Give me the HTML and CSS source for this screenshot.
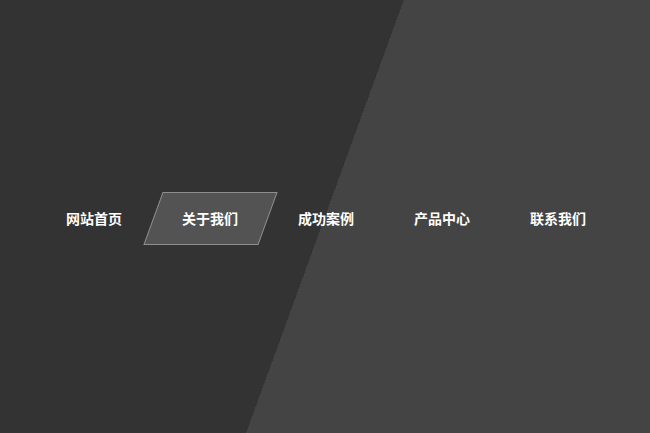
FILE: index.html
```html
<!DOCTYPE html>
<html lang="zh">
<head>
<meta charset="utf-8">
<title>导航</title>
<link rel="stylesheet" href="styles.css">
</head>
<body>
<div class="stage">
  <nav class="nav">
    <a class="nav-item" href="#">网站首页</a>
    <a class="nav-item active" href="#">关于我们</a>
    <a class="nav-item" href="#">成功案例</a>
    <a class="nav-item" href="#">产品中心</a>
    <a class="nav-item" href="#">联系我们</a>
  </nav>
</div>
</body>
</html>
```

FILE: styles.css
```css
html, body {
  margin: 0;
  padding: 0;
  height: 100%;
}
body {
  background: linear-gradient(110deg, #333333 50%, #444444 50%);
  font-family: "Microsoft YaHei", "Noto Sans CJK SC", "Noto Sans", sans-serif;
}
.stage {
  height: 100%;
  display: flex;
  align-items: center;
  justify-content: center;
}
.nav {
  display: flex;
  margin-top: 3px;
  margin-left: 2px;
}
.nav-item {
  position: relative;
  width: 116px;
  height: 53px;
  display: flex;
  align-items: center;
  justify-content: center;
  color: #ffffff;
  text-decoration: none;
  font-size: 14px;
  font-weight: bold;
}
.nav-item.active::before {
  content: "";
  position: absolute;
  top: 0;
  bottom: 0;
  left: 1px;
  right: 0;
  background: rgba(255, 255, 255, 0.16);
  border: 1px solid #8e8e8e;
  transform: skewX(-20deg);
  z-index: 0;
}
.nav-item span, .nav-item {
  z-index: 1;
}
```
